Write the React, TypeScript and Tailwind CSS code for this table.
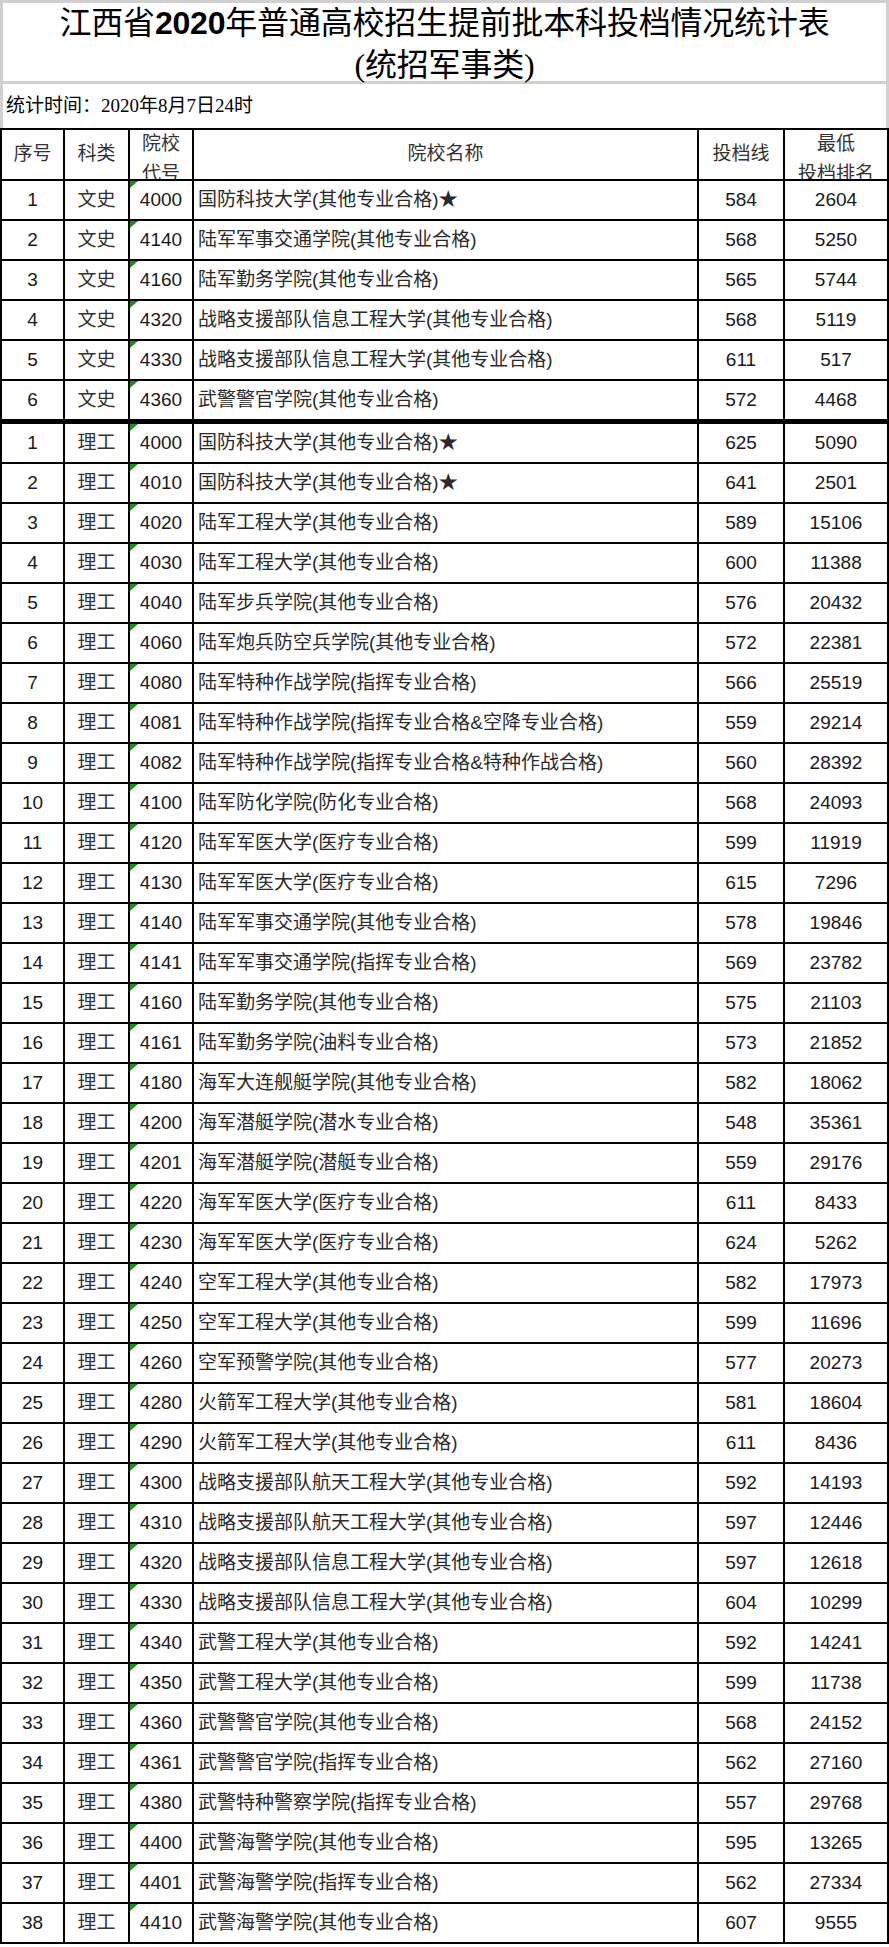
const wenshi = [
  ['1', '4000', '国防科技大学(其他专业合格)★', '584', '2604'],
  ['2', '4140', '陆军军事交通学院(其他专业合格)', '568', '5250'],
  ['3', '4160', '陆军勤务学院(其他专业合格)', '565', '5744'],
  ['4', '4320', '战略支援部队信息工程大学(其他专业合格)', '568', '5119'],
  ['5', '4330', '战略支援部队信息工程大学(其他专业合格)', '611', '517'],
  ['6', '4360', '武警警官学院(其他专业合格)', '572', '4468'],
];

const ligong = [
  ['1', '4000', '国防科技大学(其他专业合格)★', '625', '5090'],
  ['2', '4010', '国防科技大学(其他专业合格)★', '641', '2501'],
  ['3', '4020', '陆军工程大学(其他专业合格)', '589', '15106'],
  ['4', '4030', '陆军工程大学(其他专业合格)', '600', '11388'],
  ['5', '4040', '陆军步兵学院(其他专业合格)', '576', '20432'],
  ['6', '4060', '陆军炮兵防空兵学院(其他专业合格)', '572', '22381'],
  ['7', '4080', '陆军特种作战学院(指挥专业合格)', '566', '25519'],
  ['8', '4081', '陆军特种作战学院(指挥专业合格&空降专业合格)', '559', '29214'],
  ['9', '4082', '陆军特种作战学院(指挥专业合格&特种作战合格)', '560', '28392'],
  ['10', '4100', '陆军防化学院(防化专业合格)', '568', '24093'],
  ['11', '4120', '陆军军医大学(医疗专业合格)', '599', '11919'],
  ['12', '4130', '陆军军医大学(医疗专业合格)', '615', '7296'],
  ['13', '4140', '陆军军事交通学院(其他专业合格)', '578', '19846'],
  ['14', '4141', '陆军军事交通学院(指挥专业合格)', '569', '23782'],
  ['15', '4160', '陆军勤务学院(其他专业合格)', '575', '21103'],
  ['16', '4161', '陆军勤务学院(油料专业合格)', '573', '21852'],
  ['17', '4180', '海军大连舰艇学院(其他专业合格)', '582', '18062'],
  ['18', '4200', '海军潜艇学院(潜水专业合格)', '548', '35361'],
  ['19', '4201', '海军潜艇学院(潜艇专业合格)', '559', '29176'],
  ['20', '4220', '海军军医大学(医疗专业合格)', '611', '8433'],
  ['21', '4230', '海军军医大学(医疗专业合格)', '624', '5262'],
  ['22', '4240', '空军工程大学(其他专业合格)', '582', '17973'],
  ['23', '4250', '空军工程大学(其他专业合格)', '599', '11696'],
  ['24', '4260', '空军预警学院(其他专业合格)', '577', '20273'],
  ['25', '4280', '火箭军工程大学(其他专业合格)', '581', '18604'],
  ['26', '4290', '火箭军工程大学(其他专业合格)', '611', '8436'],
  ['27', '4300', '战略支援部队航天工程大学(其他专业合格)', '592', '14193'],
  ['28', '4310', '战略支援部队航天工程大学(其他专业合格)', '597', '12446'],
  ['29', '4320', '战略支援部队信息工程大学(其他专业合格)', '597', '12618'],
  ['30', '4330', '战略支援部队信息工程大学(其他专业合格)', '604', '10299'],
  ['31', '4340', '武警工程大学(其他专业合格)', '592', '14241'],
  ['32', '4350', '武警工程大学(其他专业合格)', '599', '11738'],
  ['33', '4360', '武警警官学院(其他专业合格)', '568', '24152'],
  ['34', '4361', '武警警官学院(指挥专业合格)', '562', '27160'],
  ['35', '4380', '武警特种警察学院(指挥专业合格)', '557', '29768'],
  ['36', '4400', '武警海警学院(其他专业合格)', '595', '13265'],
  ['37', '4401', '武警海警学院(指挥专业合格)', '562', '27334'],
  ['38', '4410', '武警海警学院(其他专业合格)', '607', '9555'],
];

const cols = 'grid grid-cols-[63px_65px_64px_505px_86px_104px]';
const cell = 'border-r-2 border-black flex items-center justify-center';

function Row({ r, kind, last }: { r: string[]; kind: string; last?: boolean }) {
  return (
    <div className={`${cols} ${last ? 'h-[43px] border-b-[5px]' : 'h-[40px] border-b-2'} border-black`}>
      <div className={cell}>{r[0]}</div>
      <div className={`${cell} text-[#333]`}>{kind}</div>
      <div className={`${cell} relative`}>
        {/* green corner mark */}
        <span className="absolute left-0 top-0 w-0 h-0 border-t-[7px] border-r-[8px] border-t-[#1e8c1e] border-r-transparent" />
        {r[1]}
      </div>
      <div className="border-r-2 border-black flex items-center pl-[4px] text-[#2a2a2a] whitespace-nowrap">{r[2]}</div>
      <div className={cell}>{r[3]}</div>
      <div className={cell}>{r[4]}</div>
    </div>
  );
}

export default function App() {
  return (
    <div className="w-[889px] bg-white text-[#1a1a1a]">
      {/* title block */}
      <div className="border-t-[3px] border-x-[3px] border-[#d0d0d0] font-['Liberation_Serif','Noto_Sans_CJK_SC',serif]">
        <div className="h-[81px] border-b-[3px] border-[#d0d0d0] flex flex-col items-center text-[32px] leading-[42px] -tracking-[0.2px] text-black">
          <div className="-mt-[1px]">
            江西省<span className="font-bold font-['Liberation_Sans_Narrow','Liberation_Sans',sans-serif]">2020</span>年普通高校招生提前批本科投档情况统计表
          </div>
          <div>(统招军事类)</div>
        </div>
        <div className="h-[44px] flex items-center pl-[3px] text-[19px] text-black">统计时间：2020年8月7日24时</div>
      </div>

      {/* table */}
      <div className="border-t-2 border-l-2 border-black font-['Liberation_Sans','Noto_Sans_CJK_SC',sans-serif] text-[19px]">
        <div className={`${cols} h-[51px] border-b-2 border-black text-[#333]`}>
          <div className={cell}>序号</div>
          <div className={cell}>科类</div>
          <div className="border-r-2 border-black flex flex-col items-center overflow-hidden leading-[30px] -mt-[1px]">
            <span>院校</span>
            <span>代号</span>
          </div>
          <div className={cell}>院校名称</div>
          <div className={cell}>投档线</div>
          <div className="border-r-2 border-black flex flex-col items-center overflow-hidden leading-[30px] -mt-[1px]">
            <span>最低</span>
            <span>投档排名</span>
          </div>
        </div>
        {wenshi.map((r, i) => (
          <Row key={'w' + i} r={r} kind="文史" last={i === wenshi.length - 1} />
        ))}
        {ligong.map((r, i) => (
          <Row key={'l' + i} r={r} kind="理工" />
        ))}
      </div>
    </div>
  );
}
